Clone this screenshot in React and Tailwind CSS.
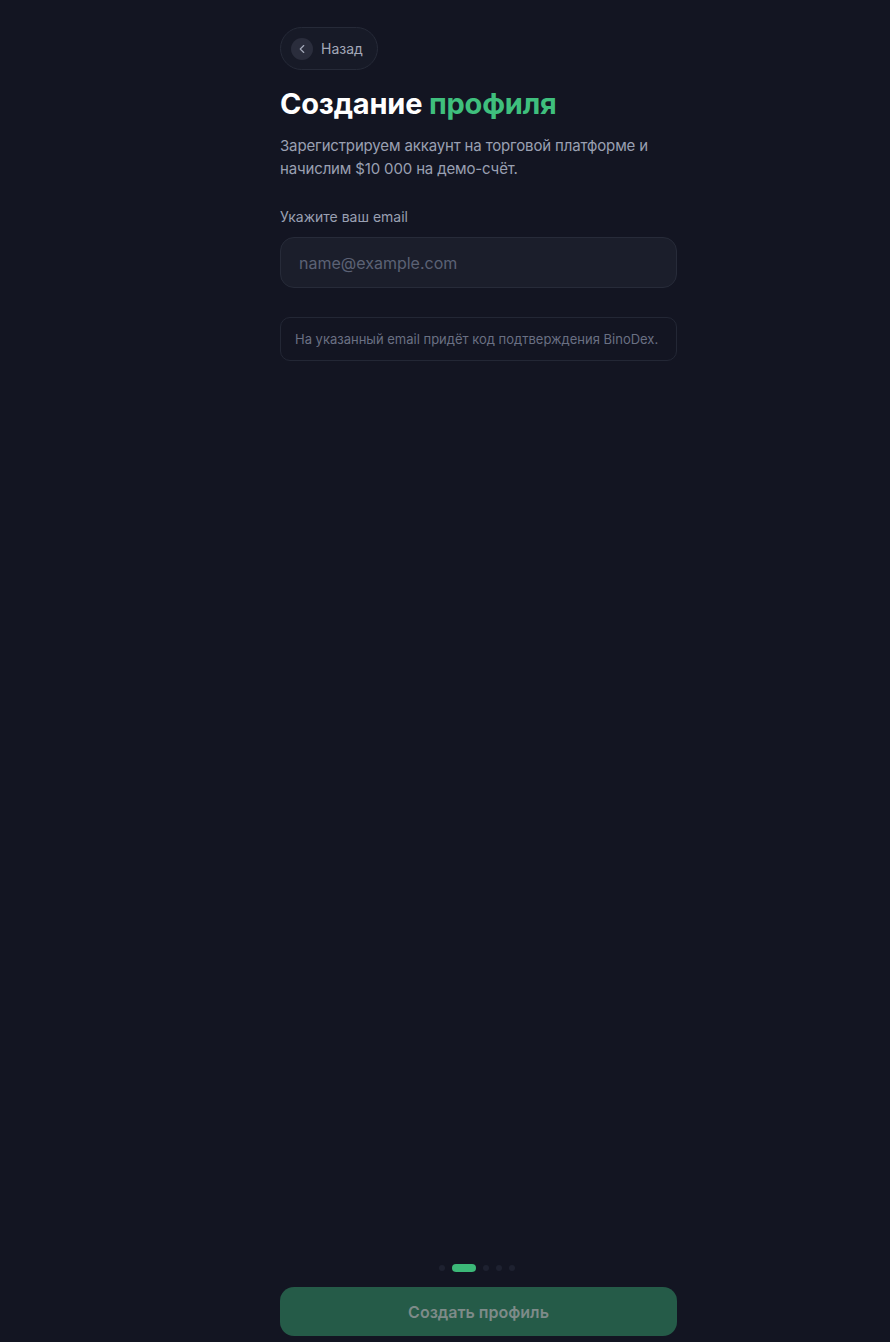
import { ChevronLeft } from 'lucide-react'

function StepDots({ active = 1, count = 5 }) {
  return (
    <div className="flex items-center justify-center gap-[7px] pr-[3px]">
      {Array.from({ length: count }).map((_, i) =>
        i === active ? (
          <span key={i} className="h-2 w-6 rounded-full bg-[#3cb878]" />
        ) : (
          <span key={i} className="h-1.5 w-1.5 rounded-full bg-[#1e2130]" />
        )
      )}
    </div>
  )
}

export default function App() {
  return (
    <div
      className="min-h-screen h-[1342px] bg-[#131522] flex pl-[280px]"
      style={{ fontFamily: 'Inter, "Noto Sans", sans-serif' }}
    >
      <div className="w-[397px] flex flex-col pt-[27px] pb-[6px]">
        {/* Back */}
        <button className="self-start flex items-center gap-2 h-[43px] pl-[10px] pr-[14px] rounded-full border border-[#262a38] bg-[#171a27]">
          <span className="flex items-center justify-center w-[22px] h-[22px] rounded-full bg-[#2a2d3c]">
            <ChevronLeft className="w-3.5 h-3.5 text-[#a3a8b8]" strokeWidth={2} />
          </span>
          <span className="text-sm text-[#a3a8b8]">Назад</span>
        </button>

        {/* Title */}
        <h1 className="mt-[17px] text-[29px] leading-[34px] font-bold tracking-[-0.2px] text-white">
          Создание <span className="text-[#3fbf7d]">профиля</span>
        </h1>
        <p className="mt-[13px] text-[15px] leading-[23px] tracking-[-0.15px] text-[#9aa0b2]">
          Зарегистрируем аккаунт на торговой платформе и начислим $10 000 на демо-счёт.
        </p>

        {/* Email */}
        <label className="mt-[27px] text-sm leading-5 text-[#9aa0b2]">Укажите ваш email</label>
        <input
          type="email"
          placeholder="name@example.com"
          className="mt-[10px] h-[51px] w-full rounded-[14px] border border-[#272b39] bg-[#1b1e2b] px-[18px] text-base text-white placeholder:text-[#5c6275] outline-none"
        />

        <div className="mt-[29px] rounded-[10px] border border-[#232735] px-[14px] py-[12px] text-[13px] leading-[18px] text-[#6a7083]">
          На указанный email придёт код подтверждения BinoDex.
        </div>

        <div className="flex-1" />

        <StepDots />

        <button className="mt-[15px] h-[49px] w-full rounded-[14px] bg-[#255b48] text-base font-semibold text-[#7e8b89]">
          Создать профиль
        </button>
      </div>
    </div>
  )
}
